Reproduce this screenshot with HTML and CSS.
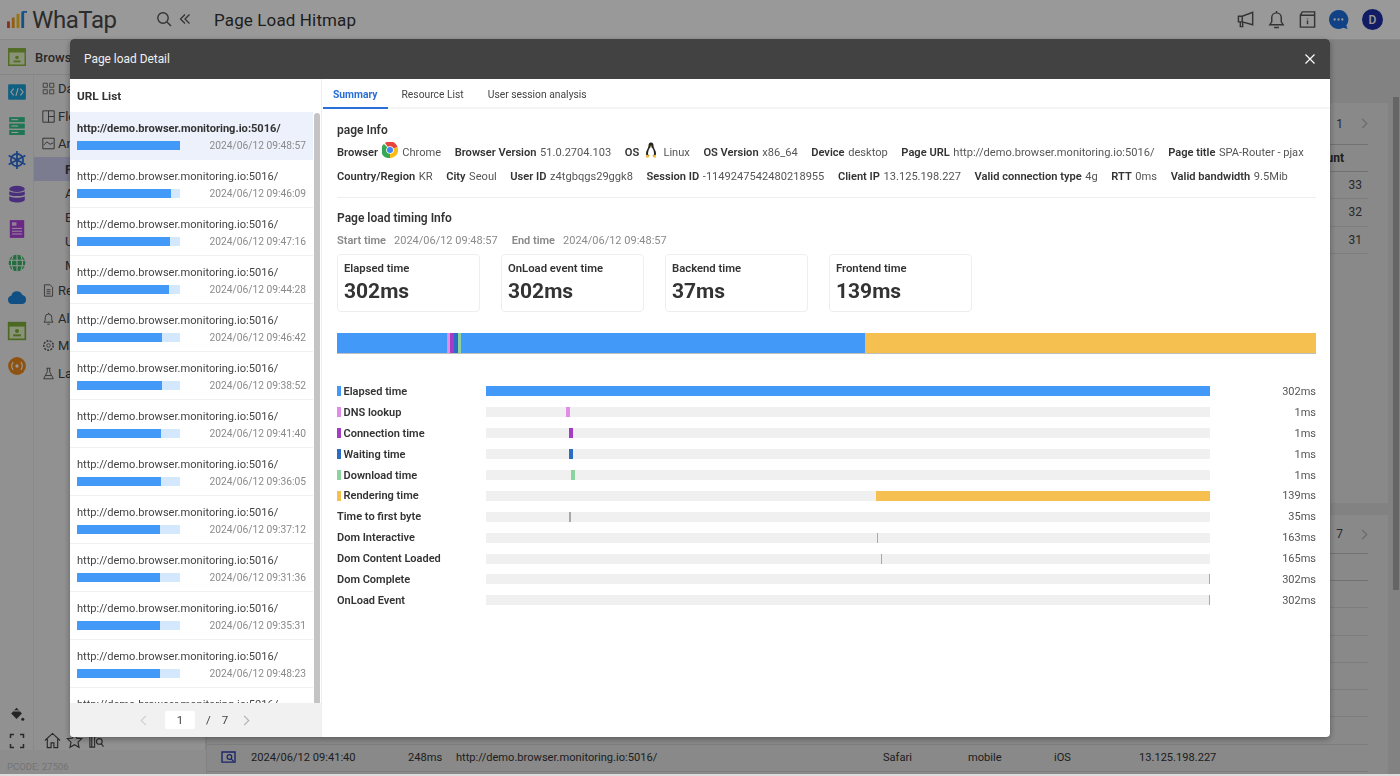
FILE: index.html
```html
<!DOCTYPE html>
<html lang="en">
<head>
<meta charset="utf-8">
<title>Page Load Hitmap</title>
<link rel="stylesheet" href="styles.css">
</head>
<body>
<div class="page">
  <header class="topbar">
    <div class="logo">
      <svg class="logo-mark" viewBox="0 0 22 20"><rect x="0" y="12" width="3" height="7" fill="#e5532d"/><rect x="5" y="8" width="3" height="11" fill="#f39a1f"/><rect x="10" y="4" width="3" height="15" fill="#f3c31f"/><path d="M15 19V3q0-2 2-2h4v2h-3v16z" fill="#2e86de"/></svg>
      <span class="logo-text">WhaTap</span>
    </div>
    <svg class="ico-search" viewBox="0 0 16 16"><circle cx="7" cy="7" r="5.2" fill="none" stroke="#555" stroke-width="1.4"/><path d="M11 11l4 4" stroke="#555" stroke-width="1.5"/></svg>
    <svg class="ico-collapse" viewBox="0 0 12 12"><path d="M6 1.5L1.5 6 6 10.5M10.5 1.5L6 6l4.500 4.500" fill="none" stroke="#555" stroke-width="1.300"/></svg>
    <h1 class="page-title">Page Load Hitmap</h1>
    <div class="top-icons">
      <svg class="ti" viewBox="0 0 20 20"><path d="M1.500 6.500h4l11-4v13l-11-3h-4zM5.500 6.500v6M3.500 12.500v5h2.500v-5" fill="none" stroke="#555" stroke-width="1.500"/></svg>
      <svg class="ti" viewBox="0 0 20 20"><path d="M3 15.500h14l-2-3V8a5 5 0 0 0-10 0v4.500zM10 3V1M7.500 18.500h5" fill="none" stroke="#555" stroke-width="1.500"/></svg>
      <svg class="ti" viewBox="0 0 20 20"><path d="M2.500 5.500h15v12.500h-15zM2.500 5.500l2-3.500h13v3.500" fill="none" stroke="#555" stroke-width="1.500"/><path d="M10 9v.8M10 11v4" stroke="#555" stroke-width="1.500"/></svg>
      <svg class="ti-chat" viewBox="0 0 22 22"><path d="M11 1a10 10 0 1 0 5 18.700l4.500 1.300-1.300-4A10 10 0 0 0 11 1z" fill="#1f6fe0"/><circle cx="7" cy="11" r="1.200" fill="#fff"/><circle cx="11" cy="11" r="1.200" fill="#fff"/><circle cx="15" cy="11" r="1.200" fill="#fff"/></svg>
      <span class="avatar">D</span>
    </div>
  </header>
  <div class="workspace">
    <aside class="side">
      <div class="side-head">
        <svg class="rail-ico-top" viewBox="0 0 18 18"><rect x=".75" y=".75" width="16.500" height="16.500" fill="#e6f4c8" stroke="#8cb63c" stroke-width="1.500"/><rect x="1" y="1" width="16" height="3.500" fill="#8cb63c"/><circle cx="9" cy="9.500" r="1.800" fill="#8cb63c"/><rect x="5.500" y="12.500" width="7" height="1.800" fill="#8cb63c"/></svg>
        <span class="side-title">Browser</span>
      </div>
      <div class="side-body">
        <nav class="rail">
          <svg class="ri" viewBox="0 0 18 18"><rect x="1" y="2" width="16" height="14" rx="1" fill="#1da1d8"/><path d="M6 6L3.500 9 6 12M12 6l2.500 3L12 12M10 5.500l-2 7" fill="none" stroke="#fff" stroke-width="1"/></svg>
          <svg class="ri" viewBox="0 0 18 18"><g fill="#34c48c"><rect x="2" y="1" width="14" height="4.500"/><rect x="2" y="6.800" width="14" height="4.500"/><rect x="2" y="12.600" width="14" height="4.500"/></g><g fill="#fff"><rect x="4" y="2.800" width="6" height="1"/><rect x="4" y="8.500" width="6" height="1"/><rect x="4" y="14.300" width="6" height="1"/></g></svg>
          <svg class="ri" viewBox="0 0 18 18"><g fill="none" stroke="#2f6fd8" stroke-width="1.600"><circle cx="9" cy="9" r="5.500"/><path d="M9 1v16M1.500 5l15 8M16.500 5l-15 8"/></g><circle cx="9" cy="9" r="1.800" fill="#2f6fd8"/></svg>
          <svg class="ri" viewBox="0 0 18 18"><g fill="#7c4fd0"><ellipse cx="9" cy="3.500" rx="7" ry="2.800"/><path d="M2 5.500c1 2 13 2 14 0v3c-1 2-13 2-14 0zM2 10c1 2 13 2 14 0v3.500c-1 3-13 3-14 0z"/></g></svg>
          <svg class="ri" viewBox="0 0 18 18"><rect x="2.500" y="1" width="13" height="16" fill="#b143e0"/><g fill="#f0d8fa"><rect x="4.500" y="3" width="4" height="3"/><rect x="4.500" y="8" width="9" height="1"/><rect x="4.500" y="10.500" width="9" height="1"/><rect x="4.500" y="13" width="9" height="1"/></g></svg>
          <svg class="ri" viewBox="0 0 18 18"><circle cx="9" cy="9" r="7.500" fill="#3fb56a"/><path d="M1.500 6.500h15M1.500 11.500h15M9 1.500v15M5.500 2.500q-3 6.500 0 13M12.500 2.500q3 6.500 0 13" fill="none" stroke="#fff" stroke-width=".9"/></svg>
          <svg class="ri" viewBox="0 0 20 20"><path d="M5 17a4.200 4.200 0 0 1-.7-8.300A5.800 5.800 0 0 1 15.300 8a4.600 4.600 0 0 1 .2 9z" fill="#1c86dc"/></svg>
          <svg class="ri" viewBox="0 0 18 18"><rect x="1.500" y="1.500" width="15" height="15" fill="#e6f4c8" stroke="#7fb03a" stroke-width="1.500"/><rect x="1.500" y="1.500" width="15" height="3.500" fill="#7fb03a"/><circle cx="9" cy="9" r="1.800" fill="#7fb03a"/><rect x="5.500" y="12" width="7" height="1.800" fill="#7fb03a"/></svg>
          <svg class="ri" viewBox="0 0 18 18"><circle cx="9" cy="9" r="8" fill="#ee8a1d"/><circle cx="9" cy="9" r="1.500" fill="#fff"/><path d="M5.500 5.500q-2.500 3.500 0 7M12.500 5.500q2.500 3.500 0 7" fill="none" stroke="#fff" stroke-width="1"/></svg>
          <span class="rail-spacer"></span>
          <svg class="ri-low" viewBox="0 0 18 18"><path d="M2.500 8.500L8.500 2l6 6.500-6 6z" fill="#3c3c3c"/><path d="M5 5.500h7" stroke="#ddd" stroke-width="1.500"/><circle cx="15.500" cy="14.800" r="1.700" fill="#3c3c3c"/></svg>
          <svg class="ri-low" viewBox="0 0 16 16"><path d="M1.500 5V1.500H5M11 1.500h3.500V5M14.500 11v3.500H11M5 14.500H1.500V11" fill="none" stroke="#444" stroke-width="1.500"/></svg>
        </nav>
        <nav class="menu">
          <a class="mi"><svg class="mi-ico" viewBox="0 0 16 16"><path d="M1.500 1.500h5v5h-5zM9.500 1.500h5v5h-5zM1.500 9.500h5v5h-5zM9.500 9.500h5v5h-5z" fill="none" stroke="#555"/></svg>Dashboard</a>
          <a class="mi"><svg class="mi-ico" viewBox="0 0 16 16"><path d="M1 1h14v14H1zM8 1v14M8 8h7" fill="none" stroke="#555" stroke-width="1.200"/></svg>Flex board</a>
          <a class="mi"><svg class="mi-ico" viewBox="0 0 16 16"><path d="M1 1.500h14v13H1zM2 10l4-4 4 3 4-2" fill="none" stroke="#555" stroke-width="1.200"/></svg>Analysis</a>
          <a class="sub active">Page Load</a>
          <a class="sub">AJAX</a>
          <a class="sub">Error</a>
          <a class="sub">User</a>
          <a class="sub">Metrics</a>
          <a class="mi"><svg class="mi-ico" viewBox="0 0 16 16"><path d="M3 1h7l3 3v11H3zM5.500 7h5M5.500 9.500h5M5.500 12h5" fill="none" stroke="#555" stroke-width="1.100"/></svg>Reports</a>
          <a class="mi"><svg class="mi-ico" viewBox="0 0 16 16"><path d="M2.500 12.500h11L12 10V6.500a4 4 0 0 0-8 0V10zM8 2.500V1M6.500 15h3" fill="none" stroke="#555" stroke-width="1.100"/></svg>Alert</a>
          <a class="mi"><svg class="mi-ico" viewBox="0 0 16 16"><circle cx="8" cy="8" r="2.200" fill="none" stroke="#555"/><circle cx="8" cy="8" r="5.800" fill="none" stroke="#555" stroke-width="1.800" stroke-dasharray="2.500 1.500"/></svg>Manage</a>
          <a class="mi"><svg class="mi-ico" viewBox="0 0 16 16"><path d="M5.500 1.500h5M6.500 1.500V6L2 14.500h12L9.500 6V1.500M4.500 10.500h7" fill="none" stroke="#555" stroke-width="1.100"/></svg>Labs</a>
          <span class="rail-spacer"></span>
          <div class="shortcuts">
            <svg class="sc" viewBox="0 0 18 18"><path d="M1 9l8-7.500L17 9M3.500 7.500V16.500h4v-5h3v5h4V7.500" fill="none" stroke="#444" stroke-width="1.200"/></svg>
            <svg class="sc" viewBox="0 0 18 18"><path d="M9 1.500l2.300 5 5.400.6-4 3.700 1.100 5.400L9 13.500l-4.800 2.700 1.100-5.400-4-3.700 5.400-.6z" fill="none" stroke="#444" stroke-width="1.200"/></svg>
            <svg class="sc" viewBox="0 0 18 18"><path d="M2 2h5v14H2zM7 5h3M4 2v14" fill="none" stroke="#444" stroke-width="1.200"/><circle cx="12" cy="10" r="3" fill="none" stroke="#444" stroke-width="1.200"/><path d="M14 12.500l2.500 3" stroke="#444" stroke-width="1.200"/></svg>
          </div>
        </nav>
      </div>
      <div class="pcode">PCODE: 27506</div>
    </aside>
    <main class="main">
      <div class="cards">
        <section class="card card-a">
          <div class="bg-pager"><span>1</span><i class="chev"></i></div>
          <div class="bg-head"><span>Count</span></div>
          <div class="bg-row"><span>33</span></div>
          <div class="bg-row"><span>32</span></div>
          <div class="bg-row"><span>31</span></div>
        </section>
        <section class="card card-b">
          <div class="bg-pager pager-b"><span>7</span><i class="chev"></i></div>
          <div class="bg-head"></div>
          <div class="bg-row"></div>
          <div class="bg-row"></div>
          <div class="bg-row"></div>
          <div class="bg-row"></div>
          <div class="bg-row"></div>
          <div class="bg-row"></div>
          <div class="bg-row data-row">
            <svg class="row-ico" viewBox="0 0 16 14"><path d="M1 1h14v11H1z" fill="none" stroke="#2c3fb0" stroke-width="1.500"/><circle cx="9" cy="6.500" r="2.500" fill="none" stroke="#2c3fb0" stroke-width="1.300"/><path d="M11 8.500l2.500 3" stroke="#2c3fb0" stroke-width="1.300"/></svg>
            <span class="c-date">2024/06/12 09:41:40</span>
            <span class="c-ms">248ms</span>
            <span class="c-url">http://demo.browser.monitoring.io:5016/</span>
            <span class="c-br">Safari</span>
            <span class="c-dev">mobile</span>
            <span class="c-os">iOS</span>
            <span class="c-ip">13.125.198.227</span>
          </div>
        </section>
      </div>
      <div class="page-scroll"></div>
    </main>
  </div>
</div>

<div class="overlay"></div>

<div class="modal">
  <div class="modal-head">
    <span class="modal-title">Page load Detail</span>
    <svg class="modal-close" viewBox="0 0 12 12"><path d="M1.500 1.500l9 9M10.500 1.500l-9 9" stroke="#fff" stroke-width="1.200"/></svg>
  </div>
  <div class="modal-body">
    <aside class="list-panel">
      <h2 class="list-title">URL List</h2>
      <div class="list-scroll">
        <ul class="url-list">
          <li class="url-item selected"><div class="url">http://demo.browser.monitoring.io:5016/</div><div class="url-meta"><span class="meter"><span class="meter-fill" style="width:100%"></span></span><span class="url-date">2024/06/12 09:48:57</span></div></li>
          <li class="url-item"><div class="url">http://demo.browser.monitoring.io:5016/</div><div class="url-meta"><span class="meter"><span class="meter-fill" style="width:91%"></span></span><span class="url-date">2024/06/12 09:46:09</span></div></li>
          <li class="url-item"><div class="url">http://demo.browser.monitoring.io:5016/</div><div class="url-meta"><span class="meter"><span class="meter-fill" style="width:90%"></span></span><span class="url-date">2024/06/12 09:47:16</span></div></li>
          <li class="url-item"><div class="url">http://demo.browser.monitoring.io:5016/</div><div class="url-meta"><span class="meter"><span class="meter-fill" style="width:89%"></span></span><span class="url-date">2024/06/12 09:44:28</span></div></li>
          <li class="url-item"><div class="url">http://demo.browser.monitoring.io:5016/</div><div class="url-meta"><span class="meter"><span class="meter-fill" style="width:83%"></span></span><span class="url-date">2024/06/12 09:46:42</span></div></li>
          <li class="url-item"><div class="url">http://demo.browser.monitoring.io:5016/</div><div class="url-meta"><span class="meter"><span class="meter-fill" style="width:83%"></span></span><span class="url-date">2024/06/12 09:38:52</span></div></li>
          <li class="url-item"><div class="url">http://demo.browser.monitoring.io:5016/</div><div class="url-meta"><span class="meter"><span class="meter-fill" style="width:82%"></span></span><span class="url-date">2024/06/12 09:41:40</span></div></li>
          <li class="url-item"><div class="url">http://demo.browser.monitoring.io:5016/</div><div class="url-meta"><span class="meter"><span class="meter-fill" style="width:82%"></span></span><span class="url-date">2024/06/12 09:36:05</span></div></li>
          <li class="url-item"><div class="url">http://demo.browser.monitoring.io:5016/</div><div class="url-meta"><span class="meter"><span class="meter-fill" style="width:81%"></span></span><span class="url-date">2024/06/12 09:37:12</span></div></li>
          <li class="url-item"><div class="url">http://demo.browser.monitoring.io:5016/</div><div class="url-meta"><span class="meter"><span class="meter-fill" style="width:81%"></span></span><span class="url-date">2024/06/12 09:31:36</span></div></li>
          <li class="url-item"><div class="url">http://demo.browser.monitoring.io:5016/</div><div class="url-meta"><span class="meter"><span class="meter-fill" style="width:81%"></span></span><span class="url-date">2024/06/12 09:35:31</span></div></li>
          <li class="url-item"><div class="url">http://demo.browser.monitoring.io:5016/</div><div class="url-meta"><span class="meter"><span class="meter-fill" style="width:81%"></span></span><span class="url-date">2024/06/12 09:48:23</span></div></li>
          <li class="url-item"><div class="url">http://demo.browser.monitoring.io:5016/</div><div class="url-meta"><span class="meter"><span class="meter-fill" style="width:80%"></span></span><span class="url-date">2024/06/12 09:40:11</span></div></li>
        </ul>
        <div class="list-thumb"></div>
      </div>
      <div class="list-pager">
        <i class="chev chev-left"></i>
        <span class="page-input">1</span>
        <span class="page-total"><span>/</span><span>7</span></span>
        <i class="chev chev-next"></i>
      </div>
    </aside>
    <section class="detail">
      <div class="tabs">
        <span class="tab tab-active">Summary</span>
        <span class="tab">Resource List</span>
        <span class="tab">User session analysis</span>
      </div>
      <div class="summary">
        <h3 class="sec-title">page Info</h3>
        <div class="info-row">
          <span class="kv"><b>Browser</b>
            <svg class="os-ico" viewBox="0 0 16 16"><path d="M8 8L3 .9A8 8 0 0 1 15.500 5z" fill="#e8453c"/><path d="M8 8l7.500-3A8 8 0 0 1 8 16z" fill="#f9bc15"/><path d="M8 8v8A8 8 0 0 1 2 1.900z" fill="#34a853"/><circle cx="8" cy="8" r="3.800" fill="#fff"/><circle cx="8" cy="8" r="3" fill="#4285f4"/></svg>
            <span class="val">Chrome</span></span>
          <span class="kv"><b>Browser Version</b><span>51.0.2704.103</span></span>
          <span class="kv"><b>OS</b>
            <svg class="os-ico" viewBox="0 0 16 16"><path d="M8 .5c2 0 2.500 1.500 2.500 3.500 0 2 2.500 4.500 2.500 7.500 0 1-.5 2-1 2.500H4c-.5-.5-1-1.500-1-2.500 0-3 2.500-5.500 2.500-7.500C5.500 2 6 .5 8 .5z" fill="#222"/><path d="M8 5c1.500 0 3 4 3 6.500S9.500 14 8 14s-3-.5-3-2.500S6.500 5 8 5z" fill="#fff"/><path d="M6.800 3.800h2.400L8 5.200z" fill="#f5b92e"/><path d="M3 13.500l2.500-1 .7 2.500L3.500 16zM13 13.500l-2.500-1-.7 2.500 2.700 1z" fill="#f5b92e"/></svg>
            <span class="val">Linux</span></span>
          <span class="kv"><b>OS Version</b><span>x86_64</span></span>
          <span class="kv"><b>Device</b><span>desktop</span></span>
          <span class="kv"><b>Page URL</b><span>http://demo.browser.monitoring.io:5016/</span></span>
          <span class="kv"><b>Page title</b><span>SPA-Router - pjax</span></span>
        </div>
        <div class="info-row">
          <span class="kv"><b>Country/Region</b><span>KR</span></span>
          <span class="kv"><b>City</b><span>Seoul</span></span>
          <span class="kv"><b>User ID</b><span>z4tgbqgs29ggk8</span></span>
          <span class="kv"><b>Session ID</b><span>-1149247542480218955</span></span>
          <span class="kv"><b>Client IP</b><span>13.125.198.227</span></span>
          <span class="kv"><b>Valid connection type</b><span>4g</span></span>
          <span class="kv"><b>RTT</b><span>0ms</span></span>
          <span class="kv"><b>Valid bandwidth</b><span>9.5Mib</span></span>
        </div>
        <hr class="rule">
        <h3 class="sec-title">Page load timing Info</h3>
        <div class="time-range">
          <b>Start time</b><span>2024/06/12 09:48:57</span>
          <b class="end">End time</b><span>2024/06/12 09:48:57</span>
        </div>
        <div class="stat-cards">
          <div class="stat"><div class="stat-label">Elapsed time</div><div class="stat-value">302ms</div></div>
          <div class="stat"><div class="stat-label">OnLoad event time</div><div class="stat-value">302ms</div></div>
          <div class="stat"><div class="stat-label">Backend time</div><div class="stat-value">37ms</div></div>
          <div class="stat"><div class="stat-label">Frontend time</div><div class="stat-value">139ms</div></div>
        </div>
        <div class="stack">
          <span class="seg c-blue" style="width:110px"></span>
          <span class="seg c-pink" style="width:3px"></span>
          <span class="seg c-purple" style="width:4px"></span>
          <span class="seg c-navy" style="width:4px"></span>
          <span class="seg c-green" style="width:3px"></span>
          <span class="seg c-blue" style="width:404px"></span>
          <span class="seg c-yellow seg-grow"></span>
        </div>
        <div class="timeline">
          <div class="tl-row"><span class="tl-label"><i class="dot c-blue"></i>Elapsed time</span><span class="track"><i class="fill c-blue" style="left:0;width:100%"></i></span><span class="tl-val">302ms</span></div>
          <div class="tl-row"><span class="tl-label"><i class="dot c-pink"></i>DNS lookup</span><span class="track"><i class="fill c-pink" style="left:11.1%;width:.55%"></i></span><span class="tl-val">1ms</span></div>
          <div class="tl-row"><span class="tl-label"><i class="dot c-purple"></i>Connection time</span><span class="track"><i class="fill c-purple" style="left:11.45%;width:.5%"></i></span><span class="tl-val">1ms</span></div>
          <div class="tl-row"><span class="tl-label"><i class="dot c-navy"></i>Waiting time</span><span class="track"><i class="fill c-navy" style="left:11.45%;width:.5%"></i></span><span class="tl-val">1ms</span></div>
          <div class="tl-row"><span class="tl-label"><i class="dot c-green"></i>Download time</span><span class="track"><i class="fill c-green" style="left:11.8%;width:.5%"></i></span><span class="tl-val">1ms</span></div>
          <div class="tl-row"><span class="tl-label"><i class="dot c-yellow"></i>Rendering time</span><span class="track"><i class="fill c-yellow" style="left:53.9%;width:46.1%"></i></span><span class="tl-val">139ms</span></div>
          <div class="tl-row"><span class="tl-label">Time to first byte</span><span class="track"><i class="tick" style="left:11.5%"></i></span><span class="tl-val">35ms</span></div>
          <div class="tl-row"><span class="tl-label">Dom Interactive</span><span class="track"><i class="tick" style="left:54%"></i></span><span class="tl-val">163ms</span></div>
          <div class="tl-row"><span class="tl-label">Dom Content Loaded</span><span class="track"><i class="tick" style="left:54.55%"></i></span><span class="tl-val">165ms</span></div>
          <div class="tl-row"><span class="tl-label">Dom Complete</span><span class="track"><i class="tick" style="left:99.8%"></i></span><span class="tl-val">302ms</span></div>
          <div class="tl-row"><span class="tl-label">OnLoad Event</span><span class="track"><i class="tick" style="left:99.8%"></i></span><span class="tl-val">302ms</span></div>
        </div>
      </div>
    </section>
  </div>
</div>
</body>
</html>
```

FILE: styles.css
```css
* { box-sizing: border-box; }
html, body { margin: 0; padding: 0; height: 100%; overflow: hidden; }
body { font-family: Roboto, "Liberation Sans", sans-serif; color: #333; background: #dcdcdc; }
ul { list-style: none; margin: 0; padding: 0; }
h1, h2, h3 { margin: 0; }

/* background application */
.page { width: 1400px; height: 774px; display: flex; flex-direction: column; background: #f2f2f2; }
.topbar { height: 40px; flex: none; display: flex; align-items: center; background: #fff; border-bottom: 1px solid #e4e4e4; padding-left: 7px; color: #444; }
.logo { width: 149px; display: flex; align-items: center; gap: 4px; }
.logo-mark { width: 21px; height: 19px; }
.logo-text { font-size: 24px; line-height: 28px; color: #4a4a4a; letter-spacing: -.4px; }
.ico-search { width: 16px; height: 16px; margin-right: 7px; margin-top: -2px; }
.ico-collapse { width: 12px; height: 12px; margin-top: -1px; }
.page-title { font-size: 17px; font-weight: 400; color: #333; margin-left: 23px; letter-spacing: .13px; }
.top-icons { margin-left: auto; margin-right: 17px; display: flex; align-items: center; gap: 11.500px; }
.ti { width: 19px; height: 19px; }
.ti-chat { width: 21px; height: 21px; margin-right: 1.500px; }
.avatar { width: 21px; height: 21px; border-radius: 50%; background: #1d2fa8; color: #fff; font-size: 12px; font-weight: 500; display: flex; align-items: center; justify-content: center; }

.workspace { flex: 1; display: flex; min-height: 0; }
.side { width: 206px; flex: none; display: flex; flex-direction: column; border-right: 1px solid #d8d8d8; }
.side-head { height: 35px; flex: none; display: flex; align-items: center; gap: 9px; padding-left: 8px; border-bottom: 1px solid #dedede; }
.rail-ico-top { width: 18px; height: 18px; }
.side-title { font-size: 13px; font-weight: 500; color: #444; }
.side-body { flex: 1; display: flex; min-height: 0; }
.rail { width: 34px; flex: none; display: flex; flex-direction: column; align-items: center; gap: 14.200px; padding: 7px 0 1px 0; border-right: 1px solid #e4e4e4; }
.ri { width: 20px; height: 20px; flex: none; }
.rail-spacer { flex: 1; }
.ri-low { width: 16px; height: 16px; flex: none; margin-top: -3.200px; }
.menu { flex: 1; display: flex; flex-direction: column; padding: 0 0 0 8px; min-width: 0; }
.mi { height: 27.400px; display: flex; align-items: center; gap: 3px; font-size: 13px; color: #444; flex: none; }
.mi-ico { width: 13px; height: 13px; flex: none; }
.sub { height: 24px; flex: none; display: flex; align-items: center; padding-left: 31px; margin-left: -8px; font-size: 13px; color: #444; }
.sub.active { background: #cfcff2; font-weight: 700; }
.shortcuts { display: flex; gap: 5px; padding: 0 0 1px 2px; align-items: center; }
.sc { width: 17px; height: 17px; }
.pcode { height: 24px; flex: none; display: flex; align-items: center; padding: 8px 0 0 7px; font-size: 9.500px; color: #c0c0c0; background: #ececec; margin-right: -1px; }

.main { flex: 1; display: flex; min-width: 0; background: #d9d9d9; }
.cards { flex: 1; display: flex; flex-direction: column; gap: 12px; padding: 63px 0 0 1px; min-width: 0; }
.card { background: #e4e4e4; flex: none; padding-right: 13px; }
.card-a { height: 400px; }
.card-b { flex: 1; min-height: 0; }
.bg-pager { height: 42px; display: flex; align-items: center; justify-content: flex-end; gap: 16px; font-size: 12px; color: #444; padding-right: 2px; border-bottom: 1px solid #bdbdbd; margin-right: 7px; }
.pager-b { height: 39px; }
.chev { display: inline-block; width: 7px; height: 7px; border-top: 1px solid #aaa; border-right: 1px solid #aaa; transform: rotate(45deg); }
.bg-head { height: 27px; display: flex; align-items: center; justify-content: flex-end; padding-right: 24px; font-size: 12px; font-weight: 700; color: #333; border-bottom: 1px solid #bdbdbd; margin-right: 7px; }
.bg-row { height: 27.300px; display: flex; align-items: center; justify-content: flex-end; padding-right: 6px; font-size: 12px; color: #444; border-bottom: 1px solid #d0d0d0; margin-right: 7px; }
.data-row { justify-content: flex-start; padding: 0 0 0 14px; font-size: 11.100px; color: #333; }
.row-ico { width: 15px; height: 13px; margin-right: 15px; flex: none; }
.c-date { width: 157px; flex: none; }
.c-ms { width: 48px; flex: none; }
.c-url { width: 427px; flex: none; }
.c-br { width: 85px; flex: none; }
.c-dev { width: 86px; flex: none; }
.c-os { width: 85px; flex: none; }
.page-scroll { width: 12px; flex: none; margin: 57px 0 0 0; padding: 0; background: linear-gradient(#a8a8a8 0 493px, transparent 493px); border-left: 5px solid transparent; border-right: 1px solid transparent; background-clip: content-box; }

.overlay { position: fixed; left: 0; right: 0; top: 0; height: 774px; background: rgba(0, 0, 0, .4); }

/* modal */
.modal { position: fixed; left: 70px; top: 39px; width: 1260px; height: 698px; background: #fff; border-radius: 4px; display: flex; flex-direction: column; box-shadow: 0 2px 6px rgba(0, 0, 0, .35); overflow: hidden; }
.modal-head { height: 40px; flex: none; background: #424242; display: flex; align-items: center; justify-content: space-between; padding: 0 14px; }
.modal-title { font-size: 11.900px; color: #f0f0f0; }
.modal-close { width: 12px; height: 12px; }
.modal-body { flex: 1; display: flex; min-height: 0; }

.list-panel { width: 252px; flex: none; display: flex; flex-direction: column; border-right: 1px solid #eee; min-height: 0; }
.list-title { height: 33px; flex: none; font-size: 11.800px; font-weight: 700; line-height: 34px; padding-left: 7px; color: #333; }
.list-scroll { flex: 1; min-height: 0; overflow: hidden; position: relative; }
.url-list { width: 243px; }
.url-item { height: 48px; padding: 10px 7px 0 7px; border-bottom: 1px solid #f0f0f0; }
.url-item.selected { background: #edf1fb; border-bottom: 0; }
.url { font-size: 11.100px; line-height: 14px; color: #444; white-space: nowrap; }
.selected .url { font-weight: 700; color: #333; }
.url-meta { display: flex; align-items: center; justify-content: space-between; margin-top: 1px; height: 16px; }
.meter { width: 103px; height: 9px; background: #d3e8fd; display: block; }
.meter-fill { display: block; height: 100%; background: #4299f8; }
.url-date { font-size: 10.250px; color: #8a8a8a; }
.list-thumb { position: absolute; right: 1px; top: 1px; width: 6px; height: 592px; background: #c4c4c4; border-radius: 3px; }
.list-pager { height: 34px; flex: none; background: #f1f1f1; display: flex; align-items: center; padding-left: 72px; font-size: 11.500px; color: #444; }
.chev-left { border: 0; border-bottom: 1px solid #ccc; border-left: 1px solid #ccc; transform: rotate(45deg); }
.page-input { width: 30px; height: 18px; background: #fff; border-radius: 2px; display: flex; align-items: center; justify-content: center; margin-left: 16px; }
.page-total { display: flex; gap: 11px; margin-left: 11px; }
.chev-next { margin-left: 13px; border-color: #aaa; }

.detail { flex: 1; display: flex; flex-direction: column; min-width: 0; padding-left: 1px; }
.tabs { height: 30px; flex: none; display: flex; border-bottom: 2px solid #f5f5f5; }
.tab { font-size: 10.300px; line-height: 31px; height: 30px; padding: 0 12px; color: #444; }
.tab:first-child { padding: 0 10px; }
.tab-active { color: #2a6fd6; font-weight: 700; border-bottom: 2px solid #2a6fd6; margin-right: 2px; }
.summary { flex: 1; padding: 13px 14px 0 14px; min-height: 0; }
.sec-title { font-size: 12px; font-weight: 600; line-height: 16px; color: #333; }
.info-row { display: flex; align-items: center; gap: 13.600px; height: 24px; font-size: 11.100px; color: #555; white-space: nowrap; }
.info-row:first-of-type { margin-top: 2px; }
.kv { display: flex; align-items: center; gap: 3.600px; }
.kv b { font-weight: 600; color: #333; }
.os-ico { width: 16px; height: 16px; margin-top: -5px; }
.val { margin-left: 1px; }
.rule { border: 0; border-top: 1px solid #eee; margin: 9px 0 12px 0; }
.time-range { display: flex; align-items: center; height: 16px; margin-top: 6px; font-size: 11px; color: #8a8a8a; gap: 8px; }
.time-range b { font-weight: 600; color: #888; }
.time-range .end { margin-left: 6px; }
.stat-cards { display: flex; gap: 21px; margin-top: 6px; }
.stat { width: 143px; height: 58px; border: 1px solid #eee; border-radius: 4px; padding: 7px 6px 0 6px; }
.stat-label { font-size: 11.300px; line-height: 13px; font-weight: 600; color: #333; }
.stat-value { font-size: 21px; line-height: 28px; font-weight: 700; color: #333; margin-top: 2px; }
.stack { height: 21px; display: flex; margin-top: 21px; border-bottom: 1px solid rgba(0, 0, 0, .25); }
.seg { display: block; height: 100%; flex: none; }
.seg-grow { flex: 1; }
.c-blue { background: #4299f8; }
.c-pink { background: #e28be8; }
.c-purple { background: #a63cc6; }
.c-navy { background: #2b6cc4; }
.c-green { background: #8bd4a0; }
.c-yellow { background: #f5c050; }
.timeline { margin-top: 27px; }
.tl-row { height: 20.900px; display: flex; align-items: center; font-size: 11px; }
.tl-label { width: 149px; flex: none; display: flex; align-items: center; gap: 3px; font-weight: 600; color: #333; }
.dot { width: 3.500px; height: 10px; flex: none; }
.track { width: 724px; height: 10px; background: #f0f0f0; position: relative; flex: none; }
.fill { position: absolute; top: 0; height: 100%; }
.tick { position: absolute; top: 0; width: 1.500px; height: 100%; background: #a8a8a8; }
.tl-val { flex: 1; text-align: right; color: #555; }
```
